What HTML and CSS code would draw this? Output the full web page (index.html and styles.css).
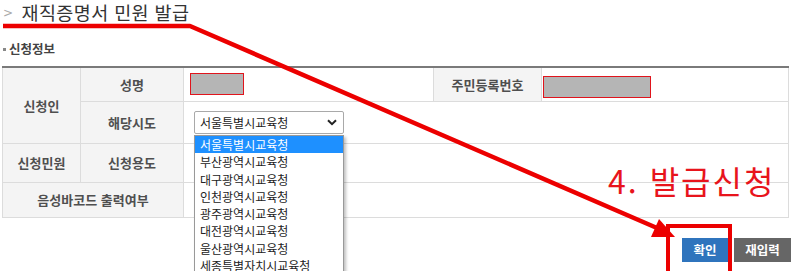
FILE: index.html
```html
<!DOCTYPE html>
<html lang="ko">
<head>
<meta charset="utf-8">
<title>재직증명서 민원 발급</title>
<link rel="stylesheet" href="styles.css">
</head>
<body>
<div class="page">
  <h1 class="title"><span class="chev">&gt;</span>재직증명서 민원 발급</h1>
  <h2 class="sub"><span class="dot"></span>신청정보</h2>
  <table class="form">
    <colgroup>
      <col class="c1"><col class="c2"><col class="c3"><col class="c4"><col class="c5">
    </colgroup>
    <tr class="r1">
      <th rowspan="2">신청인</th>
      <th>성명</th>
      <td class="v-name"><span class="masked name"></span></td>
      <th>주민등록번호</th>
      <td class="v-rrn"><span class="masked rrn"></span></td>
    </tr>
    <tr class="r2">
      <th>해당시도</th>
      <td colspan="3">
        <div class="select">
          <span>서울특별시교육청</span>
          <svg class="caret" width="10" height="7" viewBox="0 0 10 7"><path d="M1 1.2 L5 5.2 L9 1.2" fill="none" stroke="#222" stroke-width="2"/></svg>
        </div>
      </td>
    </tr>
    <tr class="r3">
      <th>신청민원</th>
      <th>신청용도</th>
      <td colspan="3"></td>
    </tr>
    <tr class="r4">
      <th colspan="2">음성바코드 출력여부</th>
      <td colspan="3"></td>
    </tr>
  </table>
  <div class="actions">
    <button class="btn ok">확인</button>
    <button class="btn reset">재입력</button>
  </div>

  <ul class="options">
    <li class="on">서울특별시교육청</li>
    <li>부산광역시교육청</li>
    <li>대구광역시교육청</li>
    <li>인천광역시교육청</li>
    <li>광주광역시교육청</li>
    <li>대전광역시교육청</li>
    <li>울산광역시교육청</li>
    <li>세종특별자치시교육청</li>
  </ul>

  <svg class="arrow" width="798" height="271" viewBox="0 0 798 271">
    <polyline points="3,26 190,26 657,228" fill="none" stroke="#ec0000" stroke-width="4.5" stroke-linejoin="round"/>
    <polygon points="675,237 651,237 659,219" fill="#ec0000"/>
  </svg>
  <div class="note">4. 발급신청</div>
  <div class="focus"></div>
</div>
</body>
</html>
```

FILE: styles.css
```css
* { box-sizing: border-box; }
html, body { margin: 0; padding: 0; background: #fff; }
body {
  font-family: "Noto Sans CJK KR", "Noto Sans", sans-serif;
  color: #444;
}
.page {
  position: relative;
  width: 798px;
  height: 271px;
  overflow: hidden;
}
.title {
  margin: 0;
  padding: 0 0 0 3px;
  height: 38px;
  line-height: 24px;
  font-size: 18.5px;
  font-weight: 400;
  color: #333;
  letter-spacing: 0.4px;
  display: flex;
  align-items: flex-start;
}
.chev {
  color: #aaa;
  font-size: 12px;
  font-family: "DejaVu Sans", sans-serif;
  margin: 1px 8px 0 0;
}
.sub {
  margin: 2px 0 0 0;
  padding-left: 3px;
  height: 18px;
  line-height: 18px;
  font-size: 12.5px;
  font-weight: 700;
  color: #444;
  display: flex;
  align-items: center;
}
.dot {
  width: 3px;
  height: 3px;
  background: #888;
  margin-right: 3px;
}
.form {
  margin: 8px 0 0 2px;
  width: 786px;
  table-layout: fixed;
  border-collapse: collapse;
  border-top: 2px solid #7a7a7a;
  font-size: 13px;
}
.c1 { width: 78px; }
.c2 { width: 103px; }
.c3 { width: 250px; }
.c4 { width: 108px; }
.c5 { width: 247px; }
.form th, .form td {
  border: 1px solid #dcdcdc;
  padding: 0;
}
.form th {
  background: #f4f4f4;
  color: #4f4f4f;
  font-weight: 700;
  text-align: center;
}
.form td { background: #fff; }
.r1 { height: 34px; }
.r2 { height: 42px; }
.r3 { height: 39px; }
.r4 { height: 35px; }
.v-name { padding-left: 6px !important; }
.v-rrn { padding-left: 1px !important; }
.masked {
  display: block;
  height: 22px;
  background: #b5b5b5;
  border: 1px solid #e0141c;
}
.masked.name { width: 54px; margin-top: -1px; }
.masked.rrn { width: 108px; margin-top: 5px; }
.select {
  margin-left: 10px;
  width: 150px;
  height: 23px;
  border: 1px solid #a9a9a9;
  border-radius: 2px;
  display: flex;
  align-items: center;
  justify-content: space-between;
  padding: 0 6px 0 5px;
  font-size: 12px;
  color: #222;
  margin-top: 1px;
}
.actions {
  display: flex;
  justify-content: flex-end;
  gap: 6px;
  padding-right: 7px;
  margin-top: 20px;
}
.btn {
  border: 0;
  height: 24px;
  padding: 0;
  font-family: inherit;
  font-size: 12.5px;
  font-weight: 700;
  color: #fff;
}
.btn.ok { width: 46px; background: #2f74bd; }
.btn.reset { width: 57px; background: #666; }
.options {
  position: absolute;
  left: 194px;
  top: 135px;
  width: 150px;
  margin: 0;
  padding: 0;
  list-style: none;
  background: #fff;
  border: 1px solid #999;
  box-shadow: 2px 2px 3px rgba(0,0,0,0.25);
  font-size: 12px;
  color: #222;
}
.options li {
  height: 17.3px;
  line-height: 17px;
  padding-left: 5px;
  white-space: nowrap;
}
.options li.on { background: #1e90ff; color: #fff; }
.arrow {
  position: absolute;
  left: 0;
  top: 0;
  pointer-events: none;
}
.note {
  position: absolute;
  left: 608px;
  top: 160px;
  font-size: 32px;
  line-height: 40px;
  letter-spacing: 2px;
  color: #e8141c;
  font-family: "Noto Sans CJK KR", sans-serif;
}
.focus {
  position: absolute;
  left: 666px;
  top: 224px;
  width: 66px;
  height: 56px;
  border: 4px solid #ec0000;
}
```
